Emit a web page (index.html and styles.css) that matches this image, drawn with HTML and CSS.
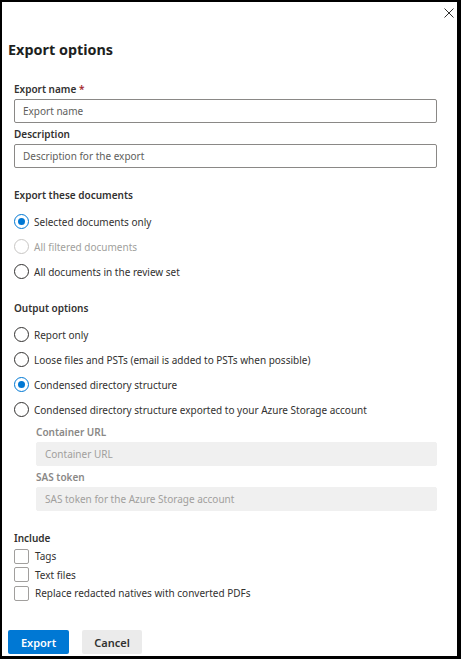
FILE: index.html
```html
<!DOCTYPE html>
<html lang="en">
<head>
<meta charset="utf-8">
<title>Export options</title>
<link rel="stylesheet" href="styles.css">
</head>
<body>
<div class="panel">
  <div class="header">
    <button class="close" aria-label="Close">
      <svg width="10" height="10" viewBox="0 0 10 10"><path d="M0.5 0.5 L9.5 9.5 M9.5 0.5 L0.5 9.5" stroke="#323130" stroke-width="1" fill="none"/></svg>
    </button>
  </div>
  <h1 class="title">Export options</h1>

  <div class="form">
    <label class="label first">Export name <span class="req">*</span></label>
    <div class="input">Export name</div>
    <label class="label mt3">Description</label>
    <div class="input">Description for the export</div>

    <div class="section-title s1">Export these documents</div>
    <div class="options">
      <div class="opt"><span class="radio checked"></span><span>Selected documents only</span></div>
      <div class="opt disabled"><span class="radio"></span><span>All filtered documents</span></div>
      <div class="opt"><span class="radio"></span><span>All documents in the review set</span></div>
    </div>

    <div class="section-title s2">Output options</div>
    <div class="options">
      <div class="opt"><span class="radio"></span><span>Report only</span></div>
      <div class="opt"><span class="radio"></span><span>Loose files and PSTs (email is added to PSTs when possible)</span></div>
      <div class="opt"><span class="radio checked"></span><span>Condensed directory structure</span></div>
      <div class="opt"><span class="radio"></span><span>Condensed directory structure exported to your Azure Storage account</span></div>
    </div>
    <div class="sub">
      <label class="label dim">Container URL</label>
      <div class="input gray">Container URL</div>
      <label class="label dim mt3">SAS token</label>
      <div class="input gray">SAS token for the Azure Storage account</div>
    </div>

    <div class="section-title s3">Include</div>
    <div class="checks">
      <div class="chk"><span class="box"></span><span>Tags</span></div>
      <div class="chk"><span class="box"></span><span>Text files</span></div>
      <div class="chk"><span class="box"></span><span>Replace redacted natives with converted PDFs</span></div>
    </div>
  </div>

  <div class="footer">
    <button class="btn primary">Export</button>
    <button class="btn secondary">Cancel</button>
  </div>
</div>
</body>
</html>
```

FILE: styles.css
```css
* { box-sizing: border-box; }
html, body { margin: 0; padding: 0; background: #000; }
body {
  font-family: "Noto Sans", "Open Sans", sans-serif;
  font-size: 10px;
  color: #323130;
}
.panel {
  width: 461px;
  height: 659px;
  background: #fff;
  border-style: solid;
  border-color: #000;
  border-width: 2px 4px 3px 2px;
  display: flex;
  flex-direction: column;
}
.header {
  height: 30px;
  display: flex;
  justify-content: flex-end;
  align-items: flex-start;
  padding: 6px 3px 0 0;
}
.close {
  border: 0;
  background: transparent;
  padding: 0;
  width: 10px;
  height: 10px;
  display: block;
  cursor: pointer;
}
.close svg { display: block; }
.title {
  margin: 8px 0 0 6px;
  font-size: 14.4px;
  line-height: 20px;
  font-weight: 700;
  color: #201f1e;
}
.form {
  padding: 0 20px 0 12px;
  display: flex;
  flex-direction: column;
}
.label {
  display: block;
  font-weight: 600;
  line-height: 16px;
  height: 16px;
}
.label.first { margin-top: 21px; }
.label.mt3 { margin-top: 3px; }
.req { color: #a4262c; }
.input {
  margin-top: 2px;
  height: 24px;
  border: 1px solid #8a8886;
  border-radius: 2px;
  padding: 0 8px;
  line-height: 22px;
  color: #605e5c;
}
.input.gray {
  background: #f0f0f0;
  border-color: #f0f0f0;
  color: #a19f9d;
}
.label.dim { color: #8a8886; }
.section-title {
  font-weight: 600;
  line-height: 16px;
  height: 16px;
}
.s1 { margin-top: 19px; }
.s2 { margin-top: 16px; }
.s3 { margin-top: 19px; }
.options {
  margin-top: 6px;
  display: flex;
  flex-direction: column;
}
.opt {
  height: 25px;
  display: flex;
  align-items: center;
  gap: 5px;
}
.radio {
  width: 15px;
  height: 15px;
  border: 1px solid #323130;
  border-radius: 50%;
  flex: none;
  position: relative;
}
.radio.checked { border-color: #0078d4; }
.radio.checked::after {
  content: "";
  position: absolute;
  left: 3px;
  top: 3px;
  width: 7px;
  height: 7px;
  border-radius: 50%;
  background: #0078d4;
}
.opt.disabled { color: #a19f9d; }
.opt.disabled .radio { border-color: #c8c6c4; }
.sub {
  padding-left: 22px;
  margin-top: 2px;
  display: flex;
  flex-direction: column;
}
.checks {
  margin-top: 1px;
  display: flex;
  flex-direction: column;
}
.chk {
  height: 18.5px;
  display: flex;
  align-items: center;
  gap: 6px;
}
.box {
  width: 15px;
  height: 15px;
  border: 1px solid #a19f9d;
  border-radius: 2px;
  flex: none;
}
.footer {
  margin-top: auto;
  padding: 0 0 2px 6px;
  display: flex;
  gap: 13px;
}
.btn {
  height: 24px;
  width: 61px;
  border: 0;
  border-radius: 2px;
  font-family: inherit;
  font-size: 11px;
  font-weight: 600;
  padding: 0;
}
.primary { background: #0078d4; color: #fff; }
.secondary { background: #ebebeb; color: #323130; width: 60px; }
```
